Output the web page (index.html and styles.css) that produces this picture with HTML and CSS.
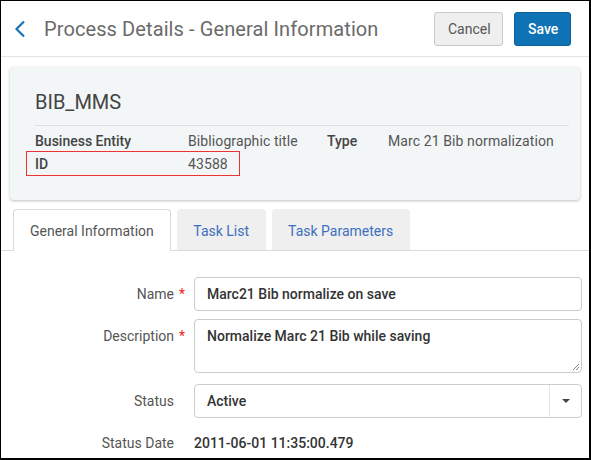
FILE: index.html
```html
<!DOCTYPE html>
<html>
<head>
<meta charset="utf-8">
<link rel="stylesheet" href="styles.css">
</head>
<body>
<div class="frame">
  <header class="topbar">
    <div class="title-wrap">
      <svg class="back" width="12" height="18" viewBox="0 0 12 18"><path d="M10 1.5 L2.5 9 L10 16.5" fill="none" stroke="#1a73b5" stroke-width="2.2"/></svg>
      <h1 class="title">Process Details - General Information</h1>
    </div>
    <div class="actions">
      <button class="btn btn-cancel">Cancel</button>
      <button class="btn btn-save">Save</button>
    </div>
  </header>

  <section class="card">
    <h2 class="card-title">BIB_MMS</h2>
    <div class="card-rule"></div>
    <div class="info">
      <div class="info-row">
        <span class="k">Business Entity</span>
        <span class="v v1">Bibliographic title</span>
        <span class="k k2">Type</span>
        <span class="v">Marc 21 Bib normalization</span>
      </div>
      <div class="info-row highlight">
        <span class="k">ID</span>
        <span class="v v1">43588</span>
      </div>
    </div>
  </section>

  <nav class="tabs">
    <div class="tab active">General Information</div>
    <div class="tab">Task List</div>
    <div class="tab">Task Parameters</div>
  </nav>

  <form class="form">
    <div class="row">
      <label class="lbl">Name<span class="req">*</span></label>
      <div class="input">Marc21 Bib normalize on save</div>
    </div>
    <div class="row row-top">
      <label class="lbl">Description<span class="req">*</span></label>
      <div class="input textarea">Normalize Marc 21 Bib while saving
        <svg class="grip" width="8" height="8" viewBox="0 0 8 8"><path d="M7 1 L1 7 M7 4 L4 7" stroke="#888" stroke-width="1"/></svg>
      </div>
    </div>
    <div class="row row-status">
      <label class="lbl">Status<span class="req blank"></span></label>
      <div class="input select"><span class="sel-text">Active</span><span class="caret-box"><span class="caret"></span></span></div>
    </div>
    <div class="row row-date">
      <label class="lbl">Status Date<span class="req blank"></span></label>
      <div class="plain">2011-06-01 11:35:00.479</div>
    </div>
  </form>
</div>
</body>
</html>
```

FILE: styles.css
```css
* { box-sizing: border-box; }
html, body { margin: 0; padding: 0; background: #fff; }
body { font-family: Roboto, "Liberation Sans", Arial, sans-serif; font-size: 14px; color: #333; }
.frame {
  width: 591px; height: 460px;
  border: 1px solid #000; border-right-width: 2px; border-bottom-width: 2px;
  overflow: hidden; background: #fff;
}
.topbar {
  height: 56px; display: flex; align-items: center; justify-content: space-between;
  border-bottom: 1px solid #e3e3e3; padding: 0 18px 0 13px;
}
.title-wrap { display: flex; align-items: center; }
.back { margin-right: 18px; margin-top: 1px; }
.title { font-size: 20px; font-weight: 400; color: #6a6a6a; margin: 0; letter-spacing: 0.1px; }
.actions { display: flex; gap: 11px; margin-top: 1px; }
.btn { font-family: inherit; font-size: 14px; height: 34px; border-radius: 3px; padding: 0 13px; }
.btn-cancel { background: #efefef; border: 1px solid #c9c9c9; color: #555; width: 69px; }
.btn-save { background: #0f72b5; border: 1px solid #0c5f99; color: #fff; font-weight: 500; width: 57px; }

.card {
  margin: 10px 9px 0 9px; height: 133px; background: #f3f6f7; border-radius: 4px;
  box-shadow: 0 1px 3px rgba(0,0,0,0.25); padding: 23px 11px 0 25px;
}
.card-title { margin: 0; font-size: 20px; font-weight: 400; color: #444; line-height: 24px; }
.card-rule { height: 1px; background: #dcdfe1; margin-top: 11px; }
.info { margin-top: 3px; margin-left: -9px; }
.info-row { display: flex; height: 23px; align-items: center; padding-left: 9px; width: 214px; }
.info-row:first-child { width: auto; }
.highlight { border: 1px solid #e33; padding-left: 8px; height: 25px; margin-top: -1px; }
.k { font-weight: 500; color: #444; width: 153px; flex: none; }
.v { color: #555; letter-spacing: 0.1px; }
.v1 { width: 139px; flex: none; }
.k2 { width: 61px; }

.tabs {
  display: flex; gap: 6px; margin-top: 9px; padding-left: 12px;
  border-bottom: 1px solid #dadada; height: 42px; align-items: flex-end;
}
.tab {
  height: 41px; padding: 1px 15.5px 0; display: flex; align-items: center;
  background: #efefef; color: #3d6fbf; border-radius: 4px 4px 0 0;
  border: 1px solid #efefef; border-bottom: none;
}
.tab.active {
  background: #fff; color: #555; border-color: #dadada; height: 42px; margin-bottom: -1px;
  padding: 1px 16px 0;
}

.form { padding-top: 26px; }
.row { display: flex; align-items: center; margin-bottom: 8px; }
.row-top { align-items: flex-start; }
.row-top .lbl { padding-top: 9px; }
.row-status { margin-top: 11px; margin-bottom: 17px; }
.lbl { width: 193px; flex: none; text-align: right; color: #555; padding-right: 0; display: flex; justify-content: flex-end; }
.req { color: #e22; width: 20px; text-align: left; padding-left: 5px; }
.req.blank { width: 20px; }
.input {
  width: 388px; height: 34px; border: 1px solid #ccc; border-radius: 4px;
  padding: 0 12px; display: flex; align-items: center; color: #333; font-weight: 500; background: #fff;
}
.textarea { height: 54px; align-items: flex-start; padding-top: 8px; position: relative; }
.grip { position: absolute; right: 1px; bottom: 1px; }
.select { padding-right: 0; justify-content: space-between; }
.caret-box { width: 32px; height: 32px; border-left: 1px solid #e6e6e6; display: flex; align-items: center; justify-content: center; }
.caret { width: 0; height: 0; border-left: 4px solid transparent; border-right: 4px solid transparent; border-top: 4px solid #444; }
.row-date .lbl { color: #555; }
.plain { padding-left: 0; color: #333; font-weight: 500; }
```
